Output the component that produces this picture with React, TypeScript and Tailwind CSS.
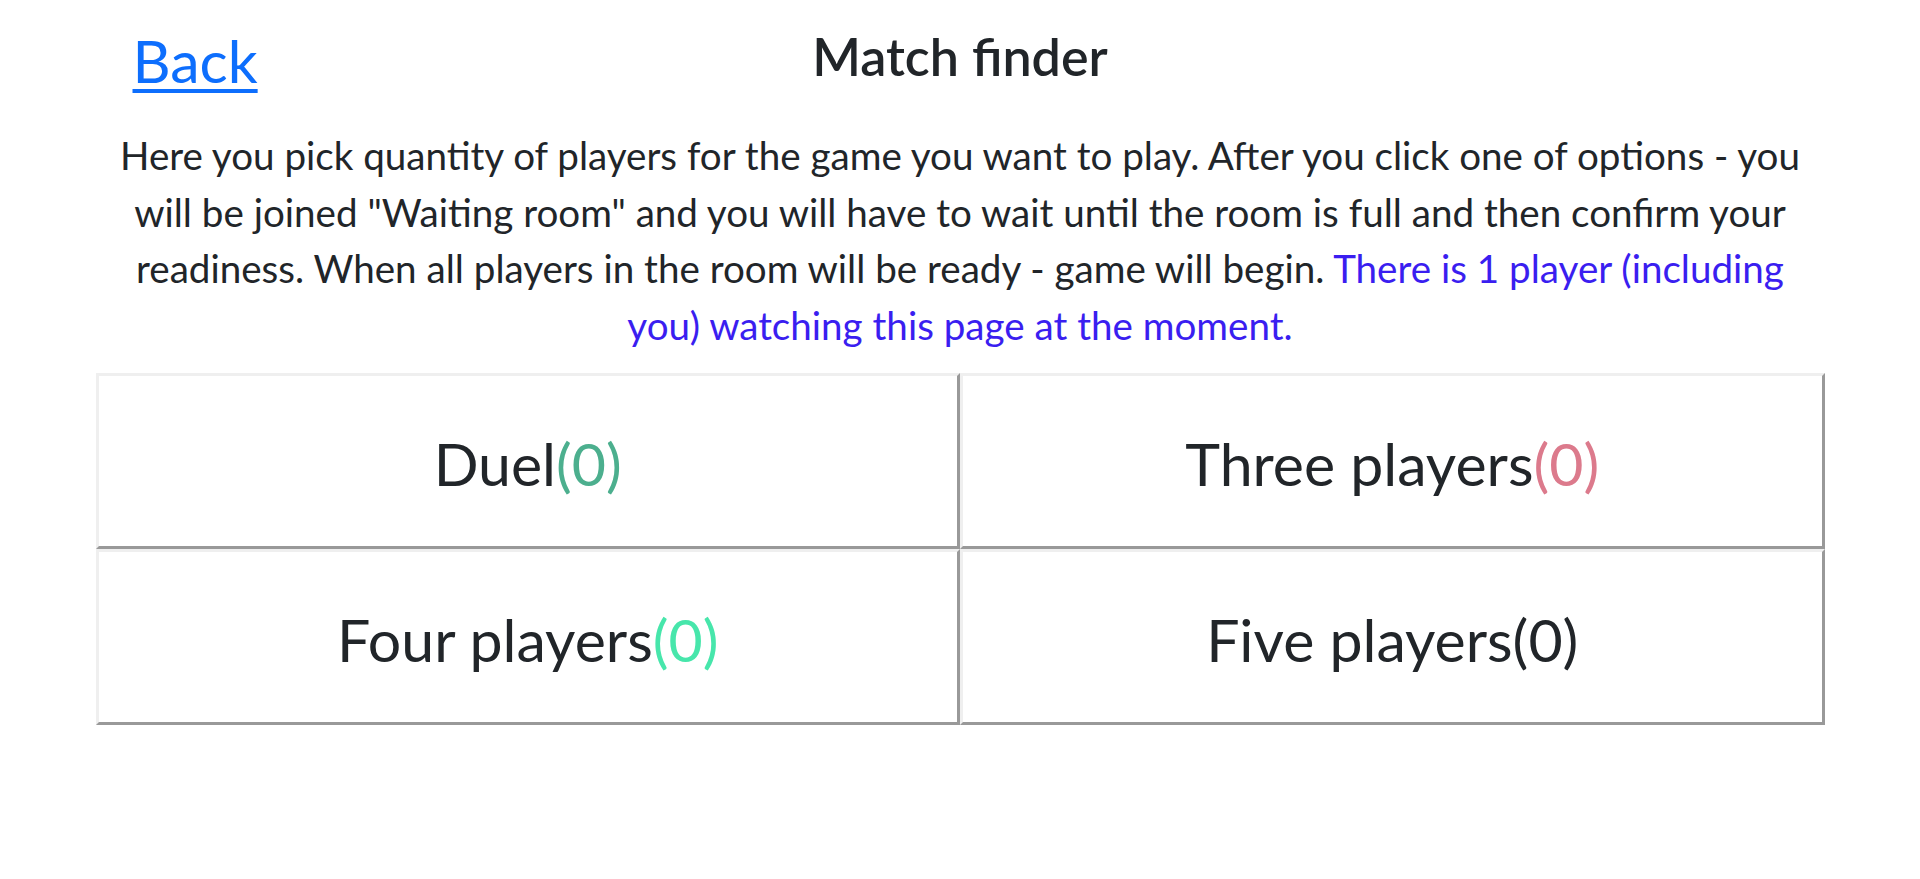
import React from 'react';

interface ModeOption {
  label: string;
  count: number;
  countClass: string;
}

const modes: ModeOption[] = [
  { label: 'Duel', count: 0, countClass: 'text-[#4caf8e]' },
  { label: 'Three players', count: 0, countClass: 'text-[#dc7a8c]' },
  { label: 'Four players', count: 0, countClass: 'text-[#47e6ab]' },
  { label: 'Five players', count: 0, countClass: 'text-[#212529]' },
];

export default function App() {
  const watching = 1;

  return (
    <div className="min-h-screen bg-white text-[#212529] font-['Lato','Noto_Sans',sans-serif]">
      <div className="mx-auto w-[1729px]">
        {/* Header */}
        <div className="grid grid-cols-[1fr_auto_1fr] items-start pt-[25px]">
          <div className="pl-[37px] mt-[1px]">
            <a
              href="#"
              className="text-[59px] leading-[1.2] text-[#0d6efd] underline decoration-[4px] underline-offset-[6px]"
            >
              Back
            </a>
          </div>
          <h2 className="text-[52px] leading-[1.2] font-semibold">Match finder</h2>
          <div />
        </div>

        {/* Description */}
        <p className="mt-[30px] px-[14px] text-center text-[38.6px] leading-[56.7px]">
          Here you pick quantity of players for the game you want to play. After you click one of options - you
          will be joined "Waiting room" and you will have to wait until the room is full and then confirm your
          readiness. When all players in the room will be ready - game will begin.{' '}
          <span className="text-[#3a1ef0]">
            There is {watching} player (including you) watching this page at the moment.
          </span>
        </p>

        {/* Options */}
        <div className="mt-[19px] grid grid-cols-2">
          {modes.map(mode => (
            <button
              key={mode.label}
              className="h-[176px] pt-[8px] bg-white border-[3px] border-t-[#efefef] border-l-[#efefef] border-b-[#999999] border-r-[#999999] text-[59px] leading-[1.2] text-[#212529] cursor-pointer"
            >
              {mode.label}
              <span className={mode.countClass}>({mode.count})</span>
            </button>
          ))}
        </div>
      </div>
    </div>
  );
}
